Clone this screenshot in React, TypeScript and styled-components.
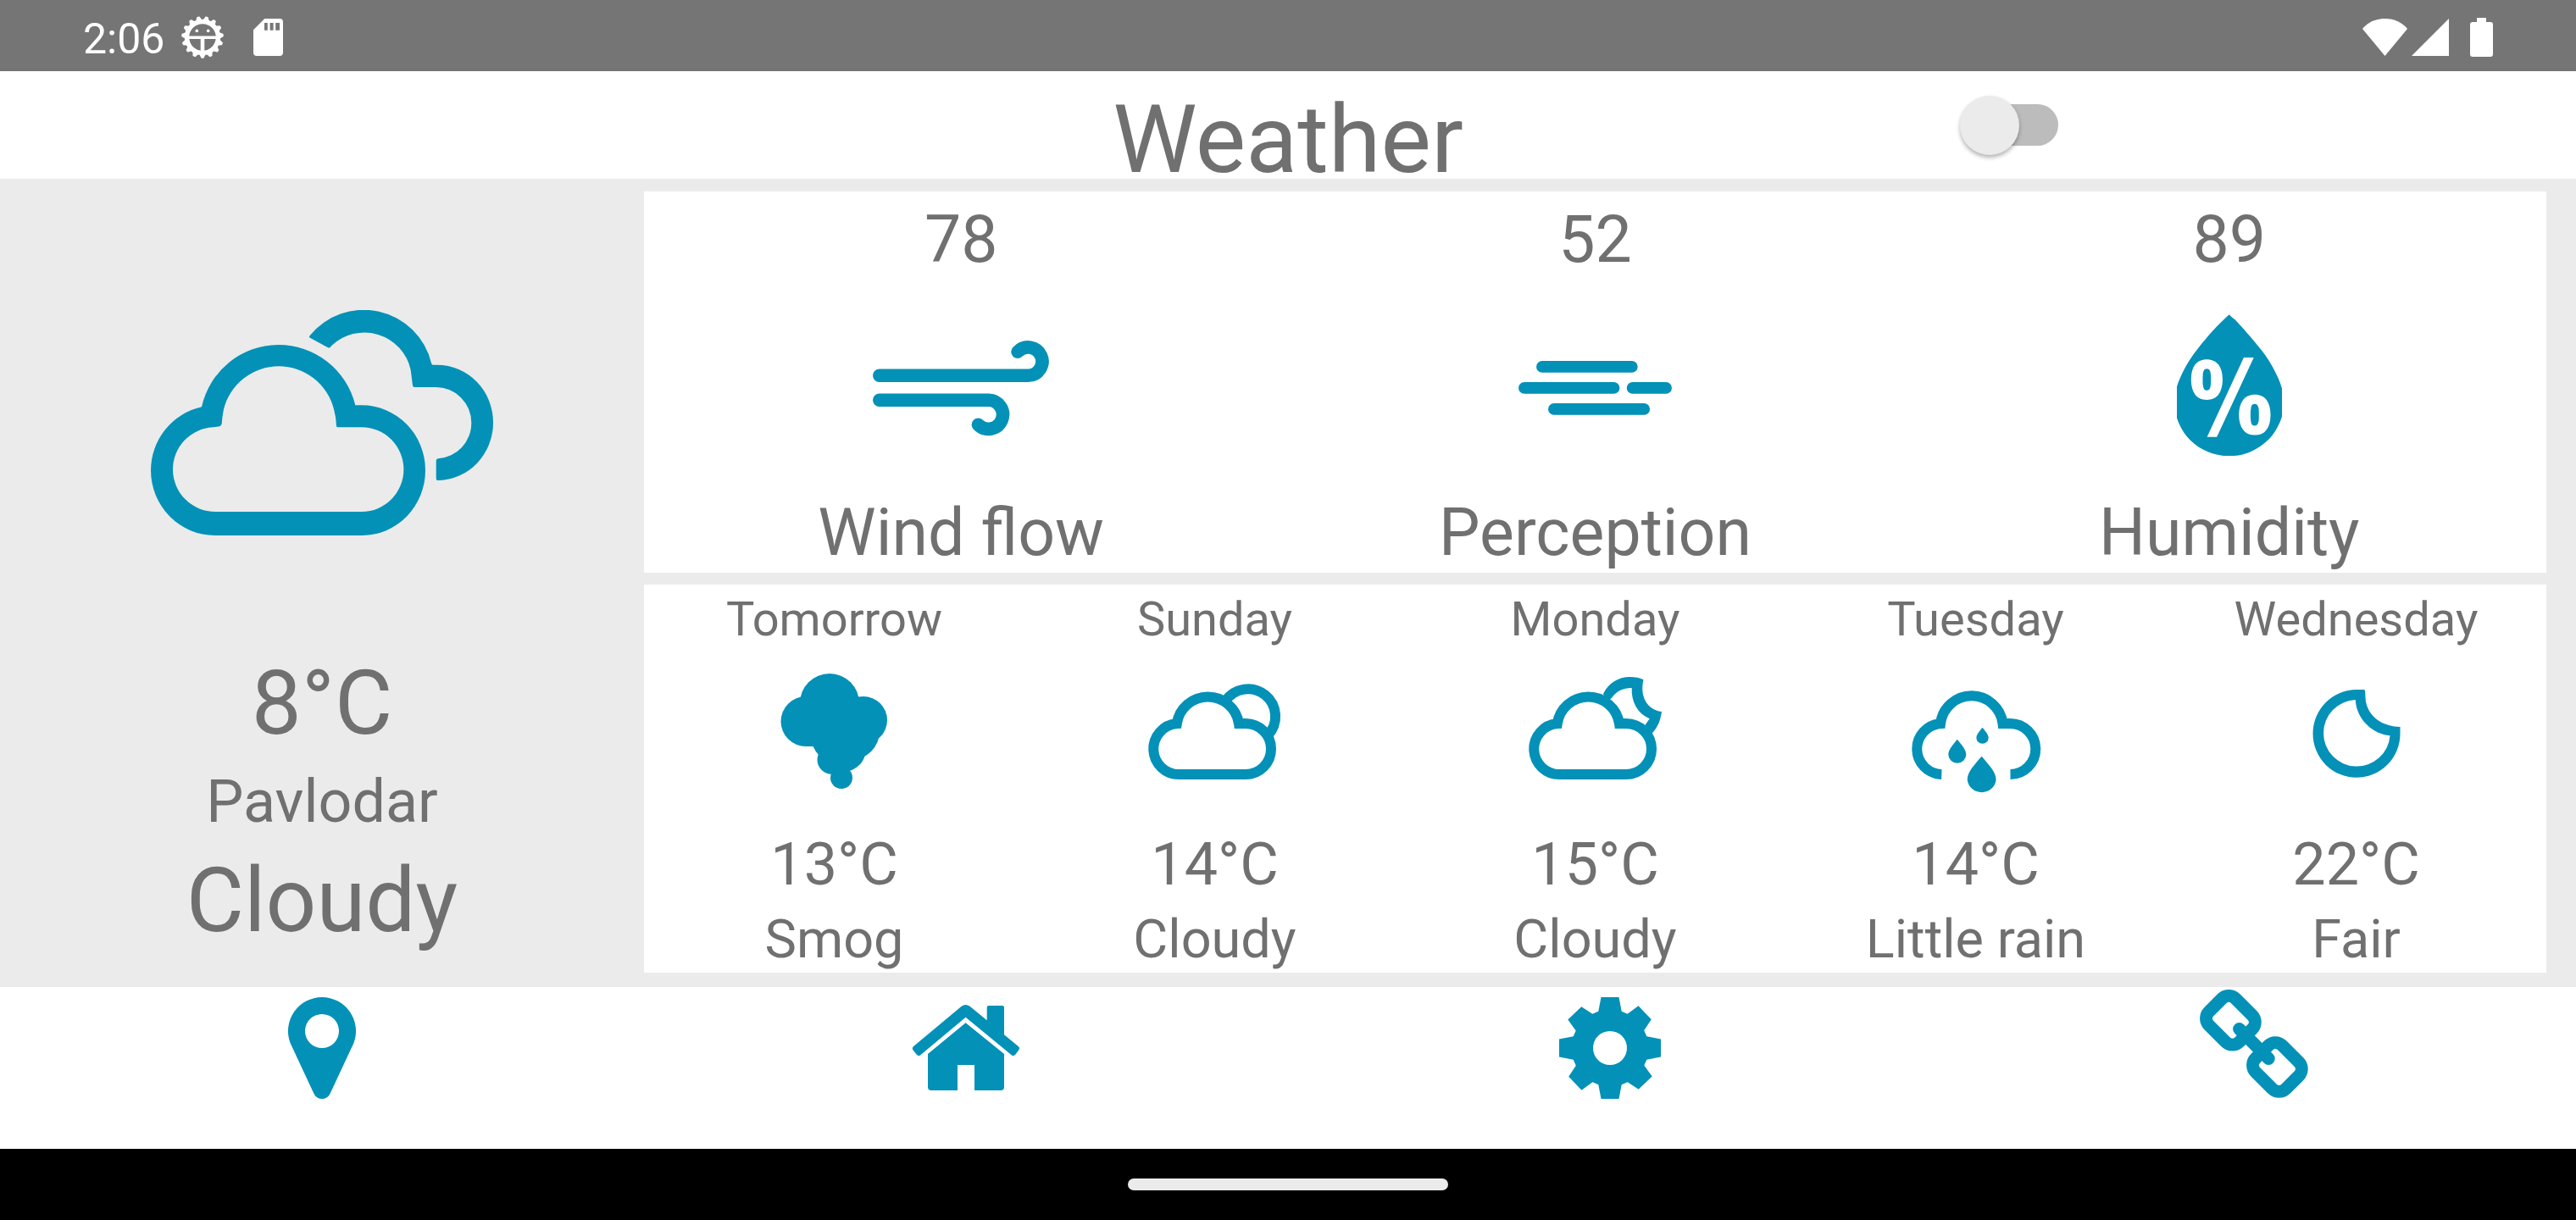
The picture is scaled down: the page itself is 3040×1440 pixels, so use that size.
import React from "react";
import styled, { createGlobalStyle } from "styled-components";
import { WiHumidity } from "react-icons/wi";

const color = {
  accent: "#0391b7",
  text: "#707070",
  surface: "#ffffff",
  backdrop: "#ebebeb",
  status: "#757575",
};

const GlobalStyle = createGlobalStyle`
  *, *::before, *::after { box-sizing: border-box; }
  body {
    margin: 0;
    background: ${color.surface};
    color: ${color.text};
    font-family: Roboto, "Noto Sans", sans-serif;
  }
  h1, h2, h3, p { margin: 0; font-weight: 400; }
  svg { display: block; flex: none; }
`;

const Screen = styled.div`
  min-height: 100vh;
  display: flex;
  flex-direction: column;
`;

/* ---------- system bars ---------- */

const StatusBar = styled.div`
  height: 84px;
  padding: 4px 98px 0;
  display: flex;
  align-items: center;
  justify-content: space-between;
  background: ${color.status};
  color: #fff;
`;

const StatusGroup = styled.div<{ $gap: number }>`
  display: flex;
  align-items: center;
  gap: ${(p) => p.$gap}px;
`;

const Clock = styled.time`
  font-size: 50px;
  line-height: 70px;
  padding-top: 4px;
`;

const GestureBar = styled.div`
  height: 84px;
  display: flex;
  align-items: center;
  justify-content: center;
  background: #000;
`;

const GestureHandle = styled.div`
  width: 378px;
  height: 14px;
  border-radius: 7px;
  background: ${color.backdrop};
`;

/* ---------- header ---------- */

const Header = styled.header`
  height: 127px;
  display: grid;
  grid-template-columns: 1fr auto 1fr;
`;

const Title = styled.h1`
  grid-column: 2;
  align-self: end;
  font-size: 112px;
  line-height: 92px;
`;

const SwitchSlot = styled.div`
  display: flex;
  align-items: center;
  justify-content: center;
  padding-right: 24px;
`;

const Switch = styled.input`
  appearance: none;
  width: 116px;
  height: 70px;
  margin: 0;
  display: grid;
  grid-template-columns: 1fr;
  align-items: center;
  cursor: pointer;

  &::before,
  &::after {
    content: "";
    grid-area: 1 / 1;
  }
  &::before {
    height: 49px;
    margin-left: 8px;
    border-radius: 25px;
    background: #bcbcbc;
  }
  &::after {
    width: 70px;
    height: 70px;
    border-radius: 50%;
    background: ${color.backdrop};
    box-shadow: 0 3px 5px rgba(0, 0, 0, 0.3);
  }
  &:checked::before {
    background: #8fcfe0;
  }
  &:checked::after {
    justify-self: end;
    background: ${color.accent};
  }
`;

/* ---------- main ---------- */

const Main = styled.main`
  flex: 1;
  display: grid;
  grid-template-columns: 1fr 3fr;
  background: ${color.backdrop};
`;

const Current = styled.section`
  display: flex;
  flex-direction: column;
  align-items: center;
  padding-bottom: 40px;
`;

const CurrentIcon = styled.div`
  flex: 1;
  display: flex;
  align-items: center;
  padding-top: 18px;
`;

const CurrentText = styled.div`
  display: flex;
  flex-direction: column;
  align-items: center;
  gap: 13px;
`;

const Big = styled.p`
  font-size: 105px;
  line-height: 123px;
`;

const Place = styled.h2`
  font-size: 70px;
  line-height: 82px;
  margin-bottom: 2px;
`;

const Panels = styled.div`
  display: grid;
  grid-template-rows: 450fr 458fr;
  gap: 14px;
  padding: 15px 35px 17px 0;
`;

const Panel = styled.section<{ $columns: number }>`
  display: grid;
  grid-template-columns: repeat(${(p) => p.$columns}, 1fr);
  background: ${color.surface};
`;

const Metric = styled.article`
  display: flex;
  flex-direction: column;
  align-items: center;
  padding: 12px 0 2px;
  font-size: 77px;
  line-height: 90px;
`;

const MetricIcon = styled.div`
  flex: 1;
  display: flex;
  align-items: center;
  padding-top: 4px;
`;

const HumidityIcon = styled(WiHumidity)`
  width: 124px;
  height: 167px;
  margin-bottom: 8px;
  color: ${color.accent};
`;

const Day = styled.article`
  display: flex;
  flex-direction: column;
  align-items: center;
  padding: 8px 0 2px;
`;

const DayName = styled.h3`
  font-size: 56px;
  line-height: 66px;
`;

const DayIcon = styled.div`
  flex: 1;
  padding-top: 28px;
`;

const Temp = styled.p`
  font-size: 70px;
  line-height: 82px;
  margin-bottom: 11px;
`;

const Condition = styled.p`
  font-size: 63px;
  line-height: 74px;
`;

/* ---------- bottom navigation ---------- */

const Nav = styled.nav`
  height: 191px;
  display: grid;
  grid-template-columns: repeat(4, 1fr);
`;

const NavButton = styled.button`
  display: flex;
  align-items: flex-start;
  justify-content: center;
  padding: 3px 0 0;
  border: 0;
  background: none;
  color: ${color.accent};
  cursor: pointer;
`;

/* ---------- drawings ---------- */

const DebugIcon = () => (
  <svg width="50" height="50" viewBox="0 0 50 50" fill="none" stroke="#fff" aria-hidden="true">
    <circle cx="25" cy="25" r="18.5" strokeWidth="5.5" />
    {Array.from({ length: 15 }, (_, i) => (
      <path key={i} d="M21.500 43.500L24 49H26L28.500 43.500Z" fill="#fff" strokeWidth="1.6" strokeLinejoin="round" transform={`rotate(${i * 24} 25 25)`} />
    ))}
    <path d="M8 25.3H42" strokeWidth="3.6" />
    <path d="M25 25V43" strokeWidth="4.6" />
    <circle cx="18.3" cy="17.4" r="1.8" fill="#fff" stroke="none" />
    <circle cx="31.7" cy="17.4" r="1.8" fill="#fff" stroke="none" />
  </svg>
);

const SdIcon = () => (
  <svg width="35" height="44" viewBox="0 0 35 44" fill="#fff" aria-hidden="true">
    <path fillRule="evenodd" d="M13.3 0H31a4 4 0 0 1 4 4V40a4 4 0 0 1-4 4H4a4 4 0 0 1-4-4V13.3ZM13 5V13.7H16.8V5ZM19.6 5V13.7H23.6V5ZM26.2 5V13.7H31V5Z" />
  </svg>
);

const WifiIcon = () => (
  <svg width="53" height="44" viewBox="0 0 53 44" fill="#fff" aria-hidden="true">
    <path d="M0 12C6 4.500 15.500 0 26.500 0S47 4.500 53 12L26.500 44Z" />
  </svg>
);

const SignalIcon = () => (
  <svg width="44" height="44" viewBox="0 0 44 44" fill="#fff" aria-hidden="true">
    <path d="M44 0V44H0Z" />
  </svg>
);

const BatteryIcon = () => (
  <svg width="27" height="46" viewBox="0 0 27 46" fill="#fff" aria-hidden="true">
    <path d="M8 0H19V5H24A3 3 0 0 1 27 8V43A3 3 0 0 1 24 46H3A3 3 0 0 1 0 43V8A3 3 0 0 1 3 5H8Z" />
  </svg>
);

const CloudyLarge = () => (
  <svg width="404" height="266" viewBox="0 0 404 266" fill={color.accent} aria-hidden="true">
    <path
      fillRule="evenodd"
      d="M76 266A76 77 0 0 1 0 189A76 77 0 0 1 60 114.300A93 93 0 0 1 241.300 112.300H249A75 77 0 0 1 324 189A75 77 0 0 1 249 266ZM76 238H249A49.500 50 0 0 0 298.400 188A49.500 50 0 0 0 249 138.300H221Q219.200 138.300 219 137Q218.600 126 216 117A67 67 0 0 0 86 117Q84.200 126 83.700 134Q83.200 137 81 137.300L73 138.300A50 50 0 0 0 26 188A50 50 0 0 0 76 238Z"
    />
    <path d="M187.500 30.200A82 82 0 0 1 331 62.500Q331.600 64.700 333 64.700H338A66 68 0 0 1 404 133A66 68 0 0 1 339.700 201Q336.700 201.500 336.700 199V178Q336.700 175.500 339 175.300A42 42 0 0 0 378.300 133A42 42 0 0 0 336 91H311Q309.300 91 309 89L306.700 70.700A56 56 0 0 0 213 42.300Q211.500 45.300 209 44.200L187.500 32.400Q186.300 31.700 187.500 30.200Z" />
  </svg>
);

const WindIcon = () => (
  <svg width="208" height="113" viewBox="0 0 208 113" fill="none" stroke={color.accent} strokeWidth="15.600" strokeLinecap="round" aria-hidden="true">
    <path d="M7.800 41.300H183.300A16.700 16.700 0 1 0 171 13.200" />
    <path d="M7.800 70.300H136.700A17 17 0 1 1 124.400 99.300" />
  </svg>
);

const PerceptionIcon = () => (
  <svg width="181" height="64" viewBox="0 0 181 64" fill="none" stroke={color.accent} strokeWidth="13.700" strokeLinecap="round" aria-hidden="true">
    <path d="M27.900 6.900H133.800M6.900 31.900H112.500M134.600 31.900H174.100M41.900 56.900H148.200" />
  </svg>
);

const DaySvg = ({ children }: { children: React.ReactNode }) => (
  <svg width="180" height="144" viewBox="0 0 180 144" overflow="visible" fill={color.accent} aria-hidden="true">
    {children}
  </svg>
);

const CloudOutline = () => (
  <path
    fill="none"
    stroke={color.accent}
    strokeWidth="12"
    d="M118 62H126A30 30 0 0 1 126 122H47.500A30 30 0 0 1 44.800 62.100A37 37 0 0 1 118 62Z"
  />
);

const SmogIcon = () => (
  <DaySvg>
    <circle cx="84" cy="38" r="35" />
    <circle cx="56" cy="59.500" r="29.500" />
    <circle cx="124" cy="58" r="28" />
    <circle cx="109" cy="71" r="34" />
    <circle cx="96" cy="76" r="34" />
    <circle cx="100" cy="92" r="27" />
    <circle cx="86.500" cy="104.700" r="17" />
    <circle cx="98" cy="126" r="13" />
    <path d="M56 59H100V89H56Z" />
  </DaySvg>
);

const CloudSunIcon = () => (
  <DaySvg>
    <path fill="none" stroke={color.accent} strokeWidth="12" d="M102 35.500A32.300 32.300 0 1 1 152 76" />
    <CloudOutline />
  </DaySvg>
);

const CloudMoonIcon = () => (
  <DaySvg>
    <path d="M99 27C105 14 117 7 130.400 7C136.500 7 142 8 146.500 10.300C142 29 150 46 168 48C166.500 59 163 67 156.300 74L150 72L146 66L148.300 64L153.700 56.300C139 50 132 36 132.700 20C122 20 114 24 108.600 32.300L103 36Z" />
    <CloudOutline />
  </DaySvg>
);

const RainIcon = () => (
  <DaySvg>
    <path
      fill="none"
      stroke={color.accent}
      strokeWidth="12"
      d="M49.300 122A30 30 0 0 1 48 62.100A37 37 0 0 1 121.500 62H130A30 30 0 0 1 130.500 122"
    />
    <path d="M97.500 66.700C94 71 90.400 75 90.400 79A7.100 6.700 0 0 0 104.700 79C104.700 75 101 71 97.500 66.700Z" />
    <path d="M67.800 80.700C63 86.500 57.300 93 57.300 98.500A10.500 10.300 0 0 0 78.300 98.500C78.300 93 72.600 86.500 67.800 80.700Z" />
    <path d="M96.600 100.700C89 109.500 79.700 119 79.700 128A17 16.500 0 0 0 113.600 128C113.600 119 104 109.500 96.600 100.700Z" />
  </DaySvg>
);

const MoonIcon = () => (
  <DaySvg>
    <path
      fillRule="evenodd"
      d="M90 22H98.500Q100 22 100.200 24L100.500 31.300C101 50 117 65.500 141.500 66V73.800A51.500 51.900 0 1 1 90 22ZM88.800 34A39.300 39.300 0 1 0 129.500 76.300C108 74 89.500 56 88.800 34Z"
    />
  </DaySvg>
);

const NavSvg = ({ children }: { children: React.ReactNode }) => (
  <svg width="130" height="130" viewBox="0 0 130 130" fill="currentColor" aria-hidden="true">
    {children}
  </svg>
);

const PinIcon = () => (
  <NavSvg>
    <path
      fillRule="evenodd"
      d="M65 9A40 40 0 0 1 102.500 63L74.500 123C72.500 127 69 129 65 129S57.500 127 55.500 123L27.500 63A40 40 0 0 1 65 9ZM65 29A20 20 0 1 0 65 69A20 20 0 1 0 65 29Z"
    />
  </NavSvg>
);

const HomeIcon = () => (
  <NavSvg>
    <path d="M60 19.500Q64.600 16.500 69.200 19.500L89.700 36.300V21Q89.700 19 91.700 19H108Q110 19 110 21V53.300L127.300 67.500Q128.800 69 127.500 71L123 77Q121 79 119 77.500L64.600 32.700L11 77.500Q8.800 79 7 77L2.200 71Q1.200 69 2.500 67.500Z" />
    <path d="M64.600 39.300L110 76V115Q110 119 106 119H75V89H55V119H24Q20 119 20 115V76Z" />
  </NavSvg>
);

const gearQuarter = [
  [10.5, -60],
  [13.7, -43.3],
  [20.6, -40.3],
  [33.5, -49.7],
  [48.8, -33.7],
  [40.2, -20.7],
  [43.3, -13.7],
  [60, -10.5],
];

const gearPath = () => {
  let points = gearQuarter;
  const all: number[][] = [];
  for (let i = 0; i < 4; i++) {
    all.push(...points);
    points = points.map(([x, y]) => [-y, x]);
  }
  return `M${all.map(([x, y]) => `${65 + x} ${69 + y}`).join("L")}Z`;
};

const GearIcon = () => (
  <NavSvg>
    <path fillRule="evenodd" d={`${gearPath()}M65 49A20 20 0 1 0 65 89A20 20 0 1 0 65 49Z`} />
  </NavSvg>
);

const LinkIcon = () => (
  <NavSvg>
    <g fill="none" stroke="currentColor" strokeWidth="15" strokeLinecap="round">
      <rect x="-25.300" y="-22.200" width="50.600" height="44.400" rx="11.500" transform="translate(37.400 36.300) rotate(45)" />
      <rect x="-25.300" y="-22.200" width="50.600" height="44.400" rx="11.500" transform="translate(92.400 91.500) rotate(45)" />
      <path d="M47.600 46.500L82.200 81.500" />
    </g>
  </NavSvg>
);

/* ---------- data ---------- */

const metrics = [
  { value: "78", label: "Wind flow", icon: <WindIcon /> },
  { value: "52", label: "Perception", icon: <PerceptionIcon /> },
  { value: "89", label: "Humidity", icon: <HumidityIcon viewBox="7.9 5.46 14.2 19.07" aria-hidden="true" /> },
];

const days = [
  { name: "Tomorrow", temp: "13°C", condition: "Smog", icon: <SmogIcon /> },
  { name: "Sunday", temp: "14°C", condition: "Cloudy", icon: <CloudSunIcon /> },
  { name: "Monday", temp: "15°C", condition: "Cloudy", icon: <CloudMoonIcon /> },
  { name: "Tuesday", temp: "14°C", condition: "Little rain", icon: <RainIcon /> },
  { name: "Wednesday", temp: "22°C", condition: "Fair", icon: <MoonIcon /> },
];

const tabs = [
  { label: "Location", icon: <PinIcon /> },
  { label: "Home", icon: <HomeIcon /> },
  { label: "Settings", icon: <GearIcon /> },
  { label: "Links", icon: <LinkIcon /> },
];

export default function App() {
  return (
    <Screen>
      <GlobalStyle />
      <StatusBar>
        <StatusGroup $gap={35}>
          <StatusGroup $gap={20}>
            <Clock>2:06</Clock>
            <DebugIcon />
          </StatusGroup>
          <SdIcon />
        </StatusGroup>
        <StatusGroup $gap={25}>
          <StatusGroup $gap={5}>
            <WifiIcon />
            <SignalIcon />
          </StatusGroup>
          <BatteryIcon />
        </StatusGroup>
      </StatusBar>

      <Header>
        <Title>Weather</Title>
        <SwitchSlot>
          <Switch type="checkbox" role="switch" aria-label="Dark theme" />
        </SwitchSlot>
      </Header>

      <Main>
        <Current>
          <CurrentIcon>
            <CloudyLarge />
          </CurrentIcon>
          <CurrentText>
            <Big>8°C</Big>
            <Place>Pavlodar</Place>
            <Big>Cloudy</Big>
          </CurrentText>
        </Current>

        <Panels>
          <Panel $columns={3}>
            {metrics.map((m) => (
              <Metric key={m.label}>
                <p>{m.value}</p>
                <MetricIcon>{m.icon}</MetricIcon>
                <p>{m.label}</p>
              </Metric>
            ))}
          </Panel>
          <Panel $columns={5}>
            {days.map((d) => (
              <Day key={d.name}>
                <DayName>{d.name}</DayName>
                <DayIcon>{d.icon}</DayIcon>
                <Temp>{d.temp}</Temp>
                <Condition>{d.condition}</Condition>
              </Day>
            ))}
          </Panel>
        </Panels>
      </Main>

      <Nav>
        {tabs.map((t) => (
          <NavButton key={t.label} type="button" aria-label={t.label}>
            {t.icon}
          </NavButton>
        ))}
      </Nav>

      <GestureBar>
        <GestureHandle />
      </GestureBar>
    </Screen>
  );
}
